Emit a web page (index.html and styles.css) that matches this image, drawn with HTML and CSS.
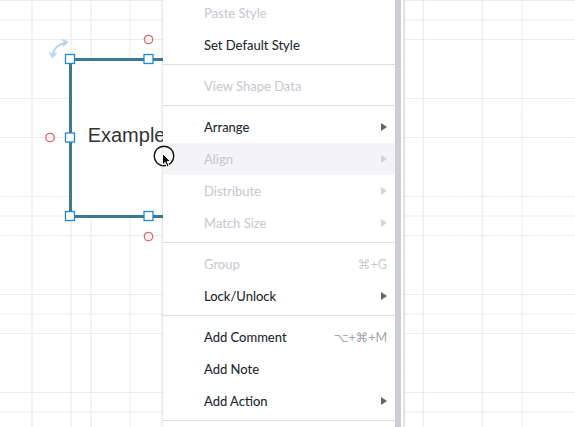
FILE: index.html
```html
<!DOCTYPE html>
<html>
<head>
<meta charset="utf-8">
<link rel="stylesheet" href="styles.css">
</head>
<body>
<div class="canvas">
  <svg class="grid" width="575" height="427" viewBox="0 0 575 427">
    <defs>
      <pattern id="dots" x="31.5" y="19.5" width="19.6" height="19.6" patternUnits="userSpaceOnUse">
        <rect x="0" y="0" width="1" height="1" fill="#ececec"/>
      </pattern>
    </defs>
    <rect width="575" height="427" fill="url(#dots)"/>
    <g stroke="#ededed" stroke-width="1.2">
      <line x1="32" y1="0" x2="32" y2="427"/>
      <line x1="71" y1="0" x2="71" y2="427"/>
      <line x1="91" y1="0" x2="91" y2="427"/>
      <line x1="130" y1="0" x2="130" y2="427"/>
      <line x1="423.5" y1="0" x2="423.5" y2="427"/>
      <line x1="482.5" y1="0" x2="482.5" y2="427"/>
      <line x1="522" y1="0" x2="522" y2="427"/>
      <line x1="0" y1="0.5" x2="575" y2="0.5"/>
      <line x1="0" y1="20" x2="575" y2="20"/>
      <line x1="0" y1="39.5" x2="575" y2="39.5"/>
      <line x1="0" y1="98.5" x2="575" y2="98.5"/>
      <line x1="0" y1="137.5" x2="575" y2="137.5"/>
      <line x1="0" y1="196.5" x2="575" y2="196.5"/>
      <line x1="0" y1="216" x2="575" y2="216"/>
      <line x1="0" y1="235.5" x2="575" y2="235.5"/>
      <line x1="0" y1="294.5" x2="575" y2="294.5"/>
      <line x1="0" y1="314" x2="575" y2="314"/>
      <line x1="0" y1="333.5" x2="575" y2="333.5"/>
      <line x1="0" y1="392.5" x2="575" y2="392.5"/>
      <line x1="0" y1="412" x2="575" y2="412"/>
    </g>
  </svg>

  <div class="shape">
    <div class="shape-text">Example Text</div>
  </div>

  <svg class="overlay" width="575" height="427" viewBox="0 0 575 427">
    <g fill="none" stroke="#b9d6f4" stroke-width="2" stroke-linecap="round">
      <path d="M52.5 55.5 Q54 45 66.5 42.5"/>
      <path d="M50 53 L52.5 57 L56 53.5"/>
      <path d="M63 40 L67 42.3 L63.5 45.5"/>
    </g>
    <g fill="none" stroke="#e36371" stroke-width="1.3">
      <circle cx="148.5" cy="39.5" r="4.2"/>
      <circle cx="50" cy="137.5" r="4.2"/>
      <circle cx="148.5" cy="236.5" r="4.2"/>
    </g>
    <g fill="#ffffff" stroke="#1a8ae0" stroke-width="1.3">
      <rect x="65.5" y="54.5" width="9" height="9"/>
      <rect x="144" y="54.5" width="9" height="9"/>
      <rect x="65.5" y="133" width="9" height="9"/>
      <rect x="65.5" y="211.5" width="9" height="9"/>
      <rect x="144" y="211.5" width="9" height="9"/>
    </g>
  </svg>

  <div class="menu">
    <div class="menu-list">
      <div class="item disabled"><span class="label">Paste Style</span></div>
      <div class="item"><span class="label">Set Default Style</span></div>
      <div class="sep"></div>
      <div class="item disabled"><span class="label">View Shape Data</span></div>
      <div class="sep"></div>
      <div class="item"><span class="label">Arrange</span><span class="arrow"></span></div>
      <div class="item disabled hover"><span class="label">Align</span><span class="arrow"></span></div>
      <div class="item disabled"><span class="label">Distribute</span><span class="arrow"></span></div>
      <div class="item disabled"><span class="label">Match Size</span><span class="arrow"></span></div>
      <div class="sep"></div>
      <div class="item disabled"><span class="label">Group</span><span class="shortcut">⌘+G</span></div>
      <div class="item"><span class="label">Lock/Unlock</span><span class="arrow"></span></div>
      <div class="sep"></div>
      <div class="item"><span class="label">Add Comment</span><span class="shortcut">⌥+⌘+M</span></div>
      <div class="item"><span class="label">Add Note</span></div>
      <div class="item"><span class="label">Add Action</span><span class="arrow"></span></div>
      <div class="sep"></div>
    </div>
    <div class="scrollbar"></div>
  </div>

  <svg class="cursor" width="30" height="30" viewBox="0 0 30 30">
    <circle cx="15" cy="14" r="9.8" fill="none" stroke="#111" stroke-width="1.4"/>
    <path d="M13.5 11.5 L13.5 23 L16.2 20.4 L18.2 25 L20.2 24.1 L18.2 19.6 L21.8 19.6 Z" fill="#111" stroke="#fff" stroke-width="1" stroke-linejoin="round"/>
  </svg>
</div>
</body>
</html>
```
FILE: styles.css
```css
html, body {
  margin: 0;
  padding: 0;
  background: #ffffff;
}

.canvas {
  position: relative;
  width: 575px;
  height: 427px;
  overflow: hidden;
  background: #ffffff;
}

.grid {
  position: absolute;
  left: 0;
  top: 0;
}

.shape {
  position: absolute;
  left: 69px;
  top: 58px;
  width: 153px;
  height: 154px;
  border: 3px solid #3c7995;
  background: #ffffff;
  display: flex;
  align-items: center;
  justify-content: center;
}

.shape-text {
  font-family: "Liberation Sans", Arial, sans-serif;
  font-size: 20px;
  color: #333333;
  white-space: nowrap;
  margin-top: -6px;
  margin-left: -2px;
}

.overlay {
  position: absolute;
  left: 0;
  top: 0;
}

.menu {
  position: absolute;
  left: 163px;
  top: 0;
  width: 240px;
  height: 427px;
  background: #ffffff;
  display: flex;
  box-shadow: -1px 0 2px rgba(0, 0, 0, 0.12), 1px 0 2px rgba(0, 0, 0, 0.12);
  border-right: 1px solid #e2e3e6;
}

.menu-list {
  flex: 1;
  margin-top: -3px;
  font-family: Lato, "DejaVu Sans", sans-serif;
  font-size: 13px;
  color: #22252b;
  -webkit-text-stroke: 0.08px currentColor;
}

.item {
  height: 32px;
  display: flex;
  align-items: center;
  padding: 0 8px 0 41px;
}

.item.hover {
  background: #f4f4f6;
}

.label {
  flex: 1;
  white-space: nowrap;
}

.disabled {
  color: #c8cacf;
}

.arrow {
  width: 0;
  height: 0;
  border-top: 4px solid transparent;
  border-bottom: 4px solid transparent;
  border-left: 6px solid #62666e;
}

.disabled .arrow {
  border-left-color: #d3d5d9;
}

.shortcut {
  color: #a1a4aa;
  font-size: 12.5px;
  -webkit-text-stroke: 0;
}

.disabled .shortcut {
  color: #c8cacf;
}

.sep {
  height: 1px;
  background: #dcdde1;
  margin: 3px 0 5px 0;
}

.scrollbar {
  width: 6px;
  background: #cbced3;
  margin-right: 2px;
}

.cursor {
  position: absolute;
  left: 149px;
  top: 142px;
}
```
